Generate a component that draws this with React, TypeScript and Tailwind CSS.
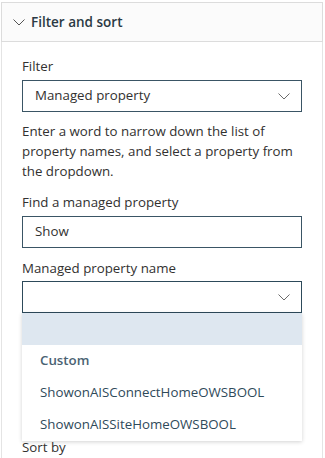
import React from "react";

function Chevron({ className }: { className?: string }) {
  return (
    <svg viewBox="0 0 12 7" className={className} fill="none" stroke="currentColor" strokeWidth="1">
      <path d="M0.5 0.5 L6 6 L11.5 0.5" />
    </svg>
  );
}

const items = ["ShowonAISConnectHomeOWSBOOL", "ShowonAISSiteHomeOWSBOOL"];

export default function App() {
  return (
    <div
      className="w-[325px] h-[458px] overflow-hidden bg-white pl-px pr-[2px] pt-[2px] text-[13.3px] text-[#323130]"
      style={{ fontFamily: '"Open Sans", "Noto Sans", sans-serif' }}
    >
      {/* Header */}
      <div className="h-[40px] flex items-center border border-[#dcdcdc] bg-[#fbfbfb]">
        <Chevron className="ml-[11px] w-[12px] h-[7px] text-[#555]" />
        <span className="ml-[6px] font-semibold text-[13.5px] text-[#2b3a44]">Filter and sort</span>
      </div>

      {/* Content */}
      <div className="relative h-[420px] border-l border-r border-[#e4e4e4] px-[20px] pt-[14px]">
        <div className="leading-[20px]">Filter</div>
        <div className="mt-[4px] h-[32px] flex items-center justify-between border border-[#3a5565] pl-[12px] pr-[11px]">
          <span>Managed property</span>
          <Chevron className="w-[12px] h-[7px] text-[#6b6b6b]" />
        </div>

        <p className="mt-[9px] leading-[20px]">
          Enter a word to narrow down the list of property names, and select a property from the dropdown.
        </p>

        <div className="mt-[11px] leading-[20px]">Find a managed property</div>
        <div className="mt-[4px] h-[32px] flex items-center border border-[#3a5565] pl-[12px]">
          <span>Show</span>
        </div>

        <div className="mt-[10px] leading-[20px]">Managed property name</div>
        <div className="relative mt-[3px]">
          <div className="h-[32px] flex items-center justify-end border border-[#2d4a5a] pr-[11px]">
            <Chevron className="w-[12px] h-[7px] text-[#6b6b6b]" />
          </div>

          {/* Dropdown list */}
          <div className="absolute left-0 right-0 top-[32px] z-10 bg-white shadow-[0_1px_4px_rgba(0,0,0,0.18)]">
            <div className="h-[32px] bg-[#dee7f0]" />
            <div className="h-[32px] flex items-center pl-[18px] font-semibold text-[#4a6273]">Custom</div>
            {items.map((name) => (
              <div key={name} className="h-[32px] flex items-center pl-[18px] text-[#2f4a5a]">
                {name}
              </div>
            ))}
          </div>
        </div>

        <div className="mt-[124px] leading-[20px]">Sort by</div>
      </div>
    </div>
  );
}
